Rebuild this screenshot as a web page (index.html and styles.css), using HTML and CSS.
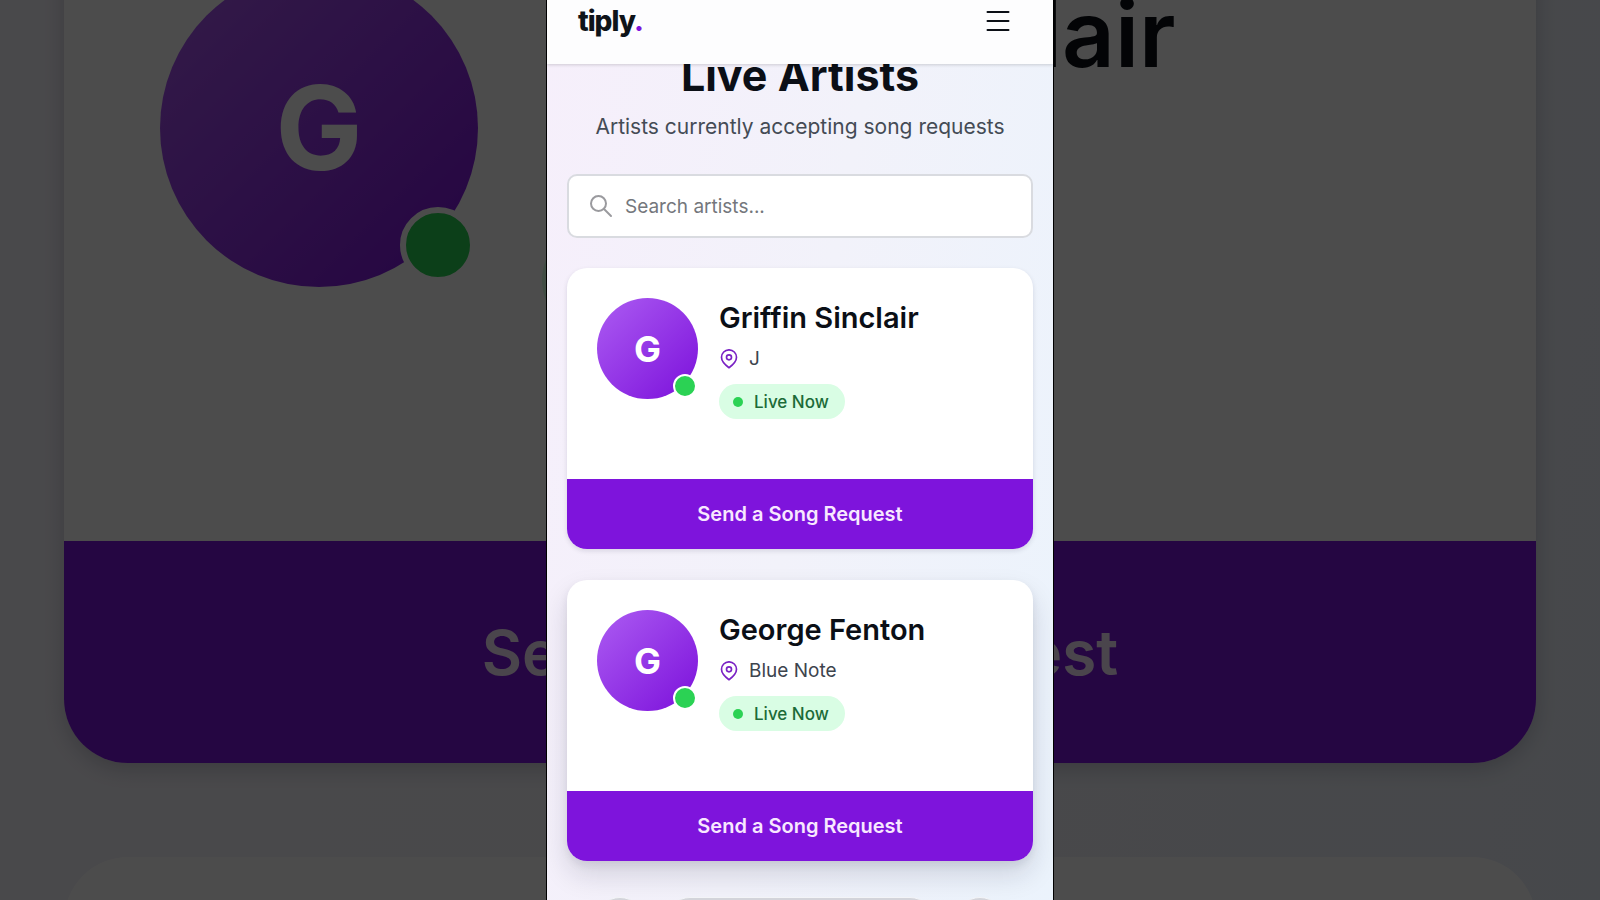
FILE: index.html
```html
<!DOCTYPE html>
<html lang="en">
<head>
<meta charset="utf-8">
<meta name="viewport" content="width=device-width, initial-scale=1">
<title>Tiply – Live Artists</title>
<link rel="stylesheet" href="styles.css">
</head>
<body>
<div class="stage">
  <div class="backdrop" aria-hidden="true">
    <div class="card card--large">
      <div class="card-body">
        <div class="avatar">G<span class="status"></span></div>
        <div class="info">
          <div class="name">Griffin Sinclair</div>
          <div class="place">
            <svg class="pin" viewBox="0 0 24 24"><path d="M12 22.500s9-6.500 9-12.500a9 9 0 1 0-18 0c0 6 9 12.500 9 12.500z"/><circle cx="12" cy="10" r="3"/></svg>
            <span>J</span>
          </div>
          <div class="badge"><span class="dot"></span>Live Now</div>
        </div>
      </div>
      <div class="request">Send a Song Request</div>
    </div>
    <div class="card card--large card--next"></div>
  </div>

  <div class="phone">
    <header class="header">
      <a class="logo" href="#">tiply<span class="logo-dot">.</span></a>
      <button class="menu" type="button" aria-label="Open menu">
        <svg viewBox="0 0 24 24"><path d="M1.500 3h21M1.500 12h21M1.500 21h21"/></svg>
      </button>
    </header>
    <main class="content">
      <h1 class="title">Live Artists</h1>
      <p class="subtitle">Artists currently accepting song requests</p>
      <label class="search">
        <svg class="search-icon" viewBox="0 0 24 24"><circle cx="9.500" cy="9.500" r="7.500"/><path d="M15 15l7 7"/></svg>
        <input class="search-input" type="text" placeholder="Search artists..." aria-label="Search artists">
      </label>
      <section class="list">
        <article class="card">
          <div class="card-body">
            <div class="avatar">G<span class="status"></span></div>
            <div class="info">
              <h2 class="name">Griffin Sinclair</h2>
              <div class="place">
                <svg class="pin" viewBox="0 0 24 24"><path d="M12 22.500s9-6.500 9-12.500a9 9 0 1 0-18 0c0 6 9 12.500 9 12.500z"/><circle cx="12" cy="10" r="3"/></svg>
                <span>J</span>
              </div>
              <div class="badge"><span class="dot"></span>Live Now</div>
            </div>
          </div>
          <button class="request" type="button">Send a Song Request</button>
        </article>
        <article class="card card--raised">
          <div class="card-body">
            <div class="avatar">G<span class="status"></span></div>
            <div class="info">
              <h2 class="name">George Fenton</h2>
              <div class="place">
                <svg class="pin" viewBox="0 0 24 24"><path d="M12 22.500s9-6.500 9-12.500a9 9 0 1 0-18 0c0 6 9 12.500 9 12.500z"/><circle cx="12" cy="10" r="3"/></svg>
                <span>Blue Note</span>
              </div>
              <div class="badge"><span class="dot"></span>Live Now</div>
            </div>
          </div>
          <button class="request" type="button">Send a Song Request</button>
        </article>
      </section>
    </main>
    <nav class="browser-bar" aria-label="Browser controls">
      <button class="bar-button" type="button" aria-label="Back"></button>
      <button class="bar-button bar-address" type="button" aria-label="Address"></button>
      <button class="bar-button" type="button" aria-label="More"></button>
    </nav>
  </div>
</div>
</body>
</html>
```
FILE: styles.css
```css
*, *::before, *::after { box-sizing: border-box; }

body {
  margin: 0;
  font-family: Inter, "Liberation Sans", sans-serif;
  color: #0b0f16;
}

h1, h2, p { margin: 0; }

button, input { font: inherit; }

button { border: 0; padding: 0; cursor: pointer; }

svg { fill: none; stroke: currentColor; stroke-linecap: round; stroke-linejoin: round; }

.stage {
  position: relative;
  display: flex;
  justify-content: center;
  height: 100vh;
  overflow: hidden;
}

/* Enlarged, dimmed copy of the first card behind the phone */
.backdrop {
  position: absolute;
  inset: 0;
  overflow: hidden;
  padding: 0 64px;
  background: linear-gradient(100deg, #f5f3fb, #f3f3f9 50%, #ecf1fa);
}

.backdrop::after {
  content: "";
  position: absolute;
  inset: 0;
  background: rgba(0, 0, 0, 0.7);
}

.phone {
  position: relative;
  width: min(508px, 100%);
  height: 100%;
  overflow: hidden;
  border: solid #000;
  border-width: 0 1px;
  background: linear-gradient(100deg, #f6effb 0%, #f2f2fa 50%, #ebf3fc 100%);
}

.header {
  position: relative;
  z-index: 1;
  display: flex;
  align-items: center;
  justify-content: space-between;
  height: 64px;
  padding: 0 43px 22px 31px;
  background: #fdfdfe;
  box-shadow: 0 1px 3px rgba(0, 0, 0, 0.16);
}

.logo {
  color: #0f1419;
  font-size: 28px;
  font-weight: 800;
  letter-spacing: -1px;
  line-height: 32px;
  text-decoration: none;
}

.logo-dot { color: #7e14dc; }

.menu { display: flex; background: none; color: #0b0f16; }

.menu svg { width: 24px; height: 24px; stroke-width: 2; }

.content { padding: 0 20px; }

.title {
  margin-top: -14px;
  font-size: 43px;
  font-weight: 700;
  line-height: 50px;
  text-align: center;
}

.subtitle {
  margin-top: 10px;
  color: #444b55;
  font-size: 21px;
  line-height: 34px;
  text-align: center;
}

.search {
  display: flex;
  align-items: center;
  gap: 12px;
  height: 64px;
  margin-top: 30px;
  padding: 0 20px;
  border: 2px solid #d9dbe0;
  border-radius: 10px;
  background: #fff;
}

.search-icon { width: 24px; height: 24px; color: #9a9a9e; stroke-width: 2; }

.search-input {
  flex: 1;
  min-width: 0;
  padding: 0;
  border: 0;
  outline: 0;
  background: none;
  font-size: 19px;
}

.search-input::placeholder { color: #74777c; opacity: 1; }

.list {
  display: flex;
  flex-direction: column;
  gap: 31px;
  margin-top: 30px;
}

.card {
  overflow: hidden;
  border-radius: 20px;
  background: #fff;
  box-shadow: 0 2px 5px rgba(20, 20, 50, 0.12);
}

.card--raised { box-shadow: 0 14px 28px rgba(20, 20, 50, 0.14), 0 4px 8px rgba(20, 20, 50, 0.08); }

.card-body {
  display: flex;
  gap: 21px;
  padding: 30px 30px 60px;
}

.avatar {
  position: relative;
  display: flex;
  flex: none;
  align-items: center;
  justify-content: center;
  width: 101px;
  height: 101px;
  border-radius: 50%;
  background: linear-gradient(135deg, #ac5cf2, #7e14dc 95%);
  color: #fff;
  font-size: 36px;
  font-weight: 700;
}

.status {
  position: absolute;
  right: 1px;
  bottom: 1px;
  width: 24px;
  height: 24px;
  border: 2px solid #fff;
  border-radius: 50%;
  background: #2bd254;
}

.info { white-space: nowrap; }

.name {
  font-size: 29px;
  font-weight: 600;
  line-height: 40px;
}

.place {
  display: flex;
  align-items: center;
  gap: 10px;
  margin-top: 6px;
  color: #3d444d;
  font-size: 19px;
  line-height: 30px;
}

.pin { width: 20px; height: 20px; color: #7a22c4; stroke-width: 2; }

.badge {
  display: inline-flex;
  align-items: center;
  gap: 11px;
  height: 35px;
  margin-top: 10px;
  padding: 0 16px 0 14px;
  border-radius: 18px;
  background: #d9fde4;
  color: #1c6b38;
  font-size: 17px;
  font-weight: 500;
}

.dot {
  width: 10px;
  height: 10px;
  border-radius: 50%;
  background: #2bd254;
}

.request {
  display: flex;
  align-items: center;
  justify-content: center;
  width: 100%;
  height: 70px;
  background: #7e14dc;
  color: #f8e8ff;
  font-size: 20px;
  font-weight: 600;
}

.card--large {
  height: 892px;
  margin-top: -129px;
  border-radius: 64px;
  display: flex;
  flex-direction: column;
  box-shadow: 0 6px 20px rgba(20, 20, 50, 0.2);
}

.card--large .card-body { flex: 1; gap: 64px; padding: 98px 96px 0; }
.card--large .avatar { width: 318px; height: 318px; font-size: 116px; }
.card--large .status { right: 2px; bottom: 4px; width: 76px; height: 76px; border-width: 6px; }
.card--large .name { font-size: 92px; line-height: 130px; }
.card--large .place { gap: 32px; margin-top: 16px; font-size: 60px; line-height: 94px; }
.card--large .pin { width: 64px; height: 64px; }
.card--large .badge { height: 110px; gap: 32px; margin-top: 16px; padding: 0 50px; border-radius: 55px; font-size: 54px; }
.card--large .dot { width: 32px; height: 32px; }
.card--large .request { height: 222px; font-size: 62px; }
.card--next { margin-top: 94px; box-shadow: none; }

.browser-bar {
  position: absolute;
  right: 48px;
  bottom: -47px;
  left: 48px;
  display: flex;
  gap: 20px;
}

.bar-button {
  width: 50px;
  height: 50px;
  border: 1px solid #f3f4f7;
  border-radius: 25px;
  background: #d3d4da;
}

.bar-address { flex: 1; }
```
